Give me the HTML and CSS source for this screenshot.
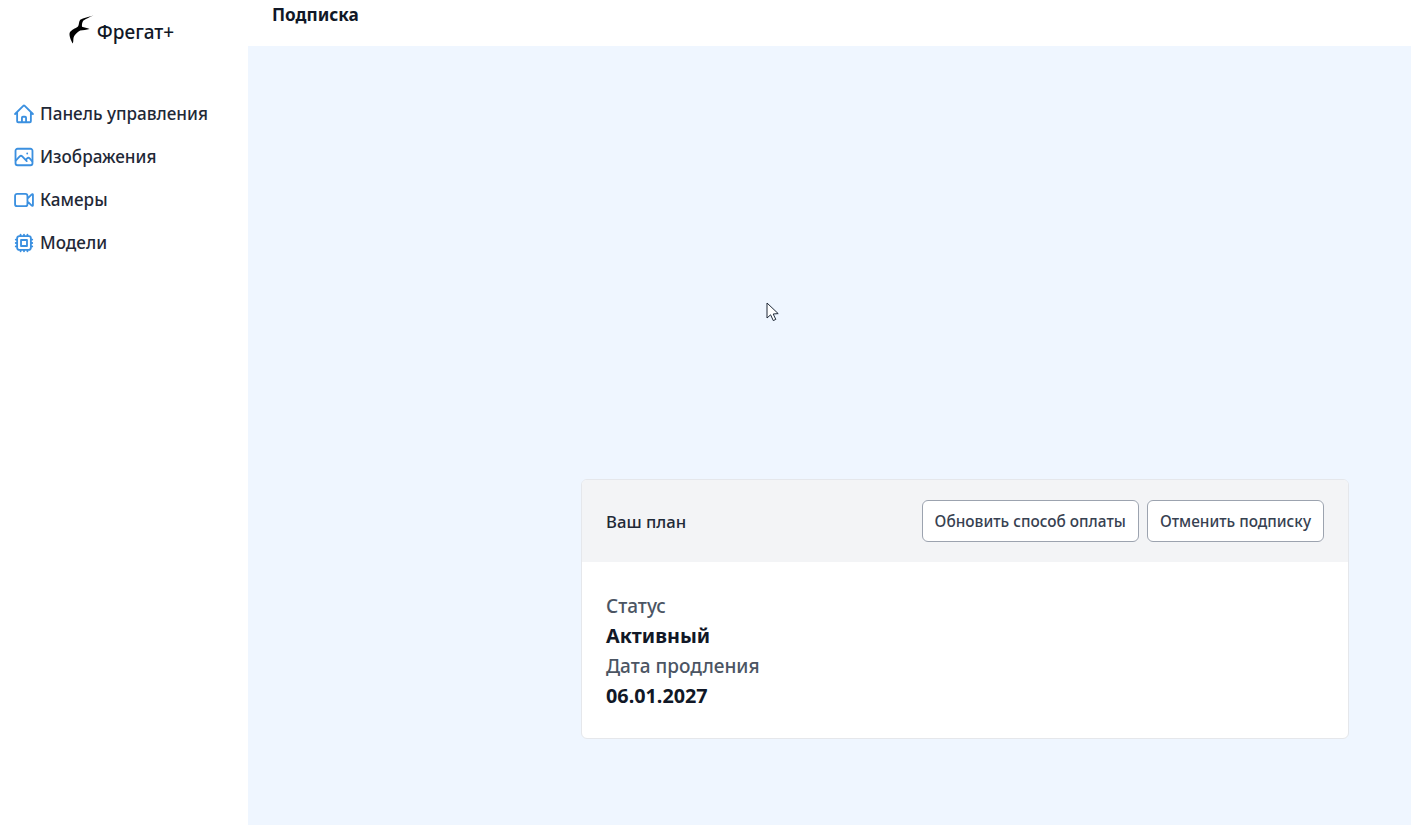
FILE: index.html
```html
<!DOCTYPE html>
<html lang="ru">
<head>
<meta charset="utf-8">
<title>Подписка</title>
<link rel="stylesheet" href="styles.css">
</head>
<body>
<div class="app">
  <aside class="sidebar">
    <div class="brand">
      <svg class="bird" viewBox="0 0 25 30" width="25" height="30"><path d="M24.5 0.6 C19.5 1.8 14.5 3 11.2 4.8 C9.8 6.6 10.2 9.6 9 11.6 C6.5 13.6 2 15 0.6 18 C0 21 2 25.5 3.8 28.6 C4.8 26 3.8 23 5.2 21 C7 18.4 9 16.6 11.2 15.4 C14 15 17.5 15 20.6 14 C18 13 15.2 12.6 13 11.8 C12.8 9.8 13 7.6 14.2 5.8 C17 3.8 21 2 24.5 0.6 Z"/></svg>
      <span class="brand-name">Фрегат+</span>
    </div>
    <nav class="nav">
      <a class="nav-item"><svg class="nav-icon" viewBox="0 0 24 24"><path d="M2.25 12l8.954-8.955a1.126 1.126 0 011.591 0L21.75 12M4.5 9.75v10.125c0 .621.504 1.125 1.125 1.125H9.75v-4.875c0-.621.504-1.125 1.125-1.125h2.25c.621 0 1.125.504 1.125 1.125V21h4.125c.621 0 1.125-.504 1.125-1.125V9.75M8.25 21h8.25"/></svg><span>Панель управления</span></a>
      <a class="nav-item"><svg class="nav-icon" viewBox="0 0 24 24"><path d="M5 3h14A2.25 2.25 0 0121.25 5.25v13.5A2.25 2.25 0 0119 21H5a2.25 2.25 0 01-2.25-2.25V5.25A2.25 2.25 0 015 3z"/><path d="M3 16l4.3-4.6a2 2 0 012.8 0L15 16.5m-1-1.5l1.4-1.4a2 2 0 012.8 0l2.8 3.1M15.5 8.2h.01"/></svg><span>Изображения</span></a>
      <a class="nav-item"><svg class="nav-icon" viewBox="0 0 24 24"><path d="M15.75 10.5l4.72-4.72a.75.75 0 011.28.53v11.38a.75.75 0 01-1.28.53l-4.72-4.72M4.5 18.75h9a2.25 2.25 0 002.25-2.25v-9a2.25 2.25 0 00-2.25-2.25h-9A2.25 2.25 0 002.25 7.5v9a2.25 2.25 0 002.25 2.25z"/></svg><span>Камеры</span></a>
      <a class="nav-item"><svg class="nav-icon" viewBox="0 0 24 24"><path d="M8.25 3v1.5M4.5 8.25H3m18 0h-1.5M4.5 12H3m18 0h-1.5m-15 3.75H3m18 0h-1.5M8.25 19.5V21M12 3v1.5m0 15V21m3.75-18v1.5m0 15V21m-9-1.5h10.5a2.25 2.25 0 002.25-2.25V6.75a2.25 2.25 0 00-2.25-2.25H6.75A2.25 2.25 0 004.5 6.75v10.5a2.25 2.25 0 002.25 2.25zM8.75 8.75h6.5v6.5h-6.5z"/></svg><span>Модели</span></a>
    </nav>
  </aside>
  <div class="content">
    <header class="topbar"><h1 class="title">Подписка</h1></header>
    <main class="main">
      <section class="card">
        <div class="card-head">
          <h2 class="plan">Ваш план</h2>
          <div class="actions">
            <button class="btn">Обновить способ оплаты</button>
            <button class="btn">Отменить подписку</button>
          </div>
        </div>
        <div class="card-body">
          <div class="label">Статус</div>
          <div class="value">Активный</div>
          <div class="label">Дата продления</div>
          <div class="value">06.01.2027</div>
        </div>
      </section>
      <svg class="cursor" viewBox="0 0 14 20" width="14" height="20"><path d="M1 1 V16 L4.6 12.8 L7.3 18.6 L9.8 17.4 L7.2 12 L12.2 11.6 Z"/></svg>
    </main>
  </div>
</div>
</body>
</html>
```
FILE: styles.css
```css
* { box-sizing: border-box; }
html, body { margin: 0; height: 100%; }
body { font-family: "Noto Sans", "Open Sans", sans-serif; color: #111827; background: #fff; }
.app { display: flex; height: 825px; overflow: hidden; }
.sidebar { width: 248px; flex: none; background: #fff; }
.brand { display: flex; align-items: center; justify-content: center; gap: 3px; height: 46px; margin-top: 8px; padding-right: 5px; }
.bird { fill: #000; display: block; margin-top: -3px; }
.brand-name { font-size: 19px; line-height: 26px; font-weight: 500; color: #111827; padding-top: 1px; }
.nav { display: flex; flex-direction: column; margin-top: 38px; padding-left: 13px; }
.nav-item { display: flex; align-items: center; gap: 5px; height: 43px; font-size: 17.1px; font-weight: 500; color: #1f2937; }
.nav-icon { width: 22px; height: 22px; fill: none; stroke: #3b90e0; stroke-width: 2; stroke-linecap: round; stroke-linejoin: round; flex: none; }
.content { flex: 1; display: flex; flex-direction: column; min-width: 0; }
.topbar { height: 46px; padding: 4px 24px 0; background: #fff; }
.title { margin: 0; font-size: 17.2px; font-weight: 700; line-height: 22px; color: #111827; }
.main { flex: 1; position: relative; background: #eff6ff; display: flex; justify-content: flex-end; align-items: flex-start; padding: 433px 62px 0 0; }
.card { width: 768px; background: #fff; border: 1px solid #e5e7eb; border-radius: 6px; overflow: hidden; }
.card-head { display: flex; align-items: center; justify-content: space-between; height: 82px; padding: 0 24px; background: #f3f4f6; }
.plan { margin: 0; font-size: 16.7px; font-weight: 500; color: #1f2937; }
.actions { display: flex; gap: 8px; }
.btn { height: 42px; padding: 0 12px; background: #fff; border: 1px solid #9ca3af; border-radius: 6px; font: 500 15.4px "Noto Sans", "Open Sans", sans-serif; color: #374151; }
.card-body { padding: 29px 24px 27px; }
.label { font-size: 19px; line-height: 30px; font-weight: 500; color: #4b5563; }
.value { font-size: 19.8px; line-height: 30px; font-weight: 700; color: #111827; }
.cursor { position: absolute; left: 518px; top: 256px; fill: #fff; stroke: #1f2937; stroke-width: 1; }
```
